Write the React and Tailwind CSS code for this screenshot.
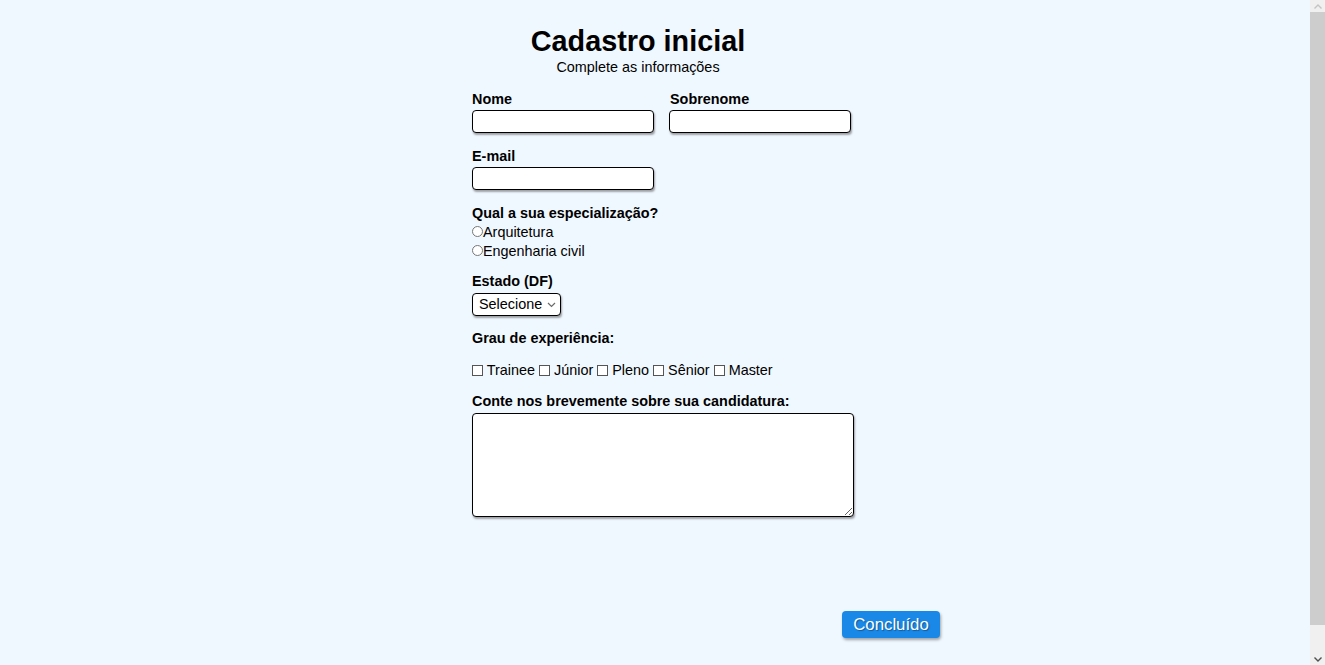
import React from "react";

const labelCls = "block text-[14.4px] leading-[17px] font-bold text-black";
const inputCls =
  "block h-[23px] w-[182px] rounded-[4px] border border-black bg-white px-1 text-[14px] outline-none shadow-[1px_2px_2px_rgba(0,0,0,0.35)]";

function Radio({ label }) {
  return (
    <label className="flex h-[19px] items-center leading-[19px]">
      <span className="mt-[-3px] inline-block h-[11px] w-[11px] rounded-full border border-[#767676] bg-white" />
      <span>{label}</span>
    </label>
  );
}

function Box() {
  return (
    <span className="mb-[-1px] inline-block h-[11px] w-[11px] border border-[#555] bg-white align-baseline" />
  );
}

// page scrollbar as seen in the screenshot
function Scrollbar() {
  return (
    <div className="flex h-full w-[15px] shrink-0 flex-col bg-[#f0f0f0]">
      <div className="flex h-[12px] items-center justify-center">
        <svg width="8" height="5" viewBox="0 0 8 5">
          <path d="M0.5 4.5L4 1l3.5 3.5" fill="none" stroke="#c4c4c4" strokeWidth="1.4" />
        </svg>
      </div>
      <div className="h-[613px] bg-[#cdcdcd]" />
      <div className="flex-1" />
      <div className="flex h-[12px] items-center justify-center">
        <svg width="8" height="5" viewBox="0 0 8 5">
          <path d="M0.5 0.5L4 4l3.5-3.5" fill="none" stroke="#505050" strokeWidth="1.4" />
        </svg>
      </div>
    </div>
  );
}

export default function App() {
  const levels = ["Trainee", "Júnior", "Pleno", "Sênior", "Master"];

  return (
    <div className="flex h-screen w-full bg-[#f0f8ff] font-['Liberation_Sans',Arial,sans-serif] text-black">
      <div className="flex-1 overflow-hidden">
        <div className="flex justify-center pt-[25px] pb-[58px]">
          <form className="w-[366px]" onSubmit={(e) => e.preventDefault()}>
            <div className="w-[332px] text-center">
              <h1 className="text-[28.8px] leading-[33px] font-bold">Cadastro inicial</h1>
              <p className="mt-[1px] text-[14.4px] leading-[17px]">Complete as informações</p>
            </div>

            <div className="mt-[15px] flex gap-[15px]">
              <div>
                <label className={labelCls}>Nome</label>
                <input type="text" className={inputCls + " mt-[2px]"} />
              </div>
              <div>
                <label className={labelCls + " pl-[1px]"}>Sobrenome</label>
                <input type="text" className={inputCls + " mt-[2px]"} />
              </div>
            </div>

            <div className="mt-[15px]">
              <label className={labelCls}>E-mail</label>
              <input type="email" className={inputCls + " mt-[2px]"} />
            </div>

            <div className="mt-[15px] text-[14.4px]">
              <p className={labelCls}>Qual a sua especialização?</p>
              <div className="mt-[1px]">
                <Radio label="Arquitetura" />
                <Radio label="Engenharia civil" />
              </div>
            </div>

            <div className="mt-[12px]">
              <label className={labelCls}>Estado (DF)</label>
              <div className="mt-[3px] flex h-[23px] w-[89px] items-center justify-between rounded-[4px] border border-black bg-white pl-[6px] pr-[4px] text-[14.4px] shadow-[1px_2px_2px_rgba(0,0,0,0.35)]">
                <span>Selecione</span>
                <svg width="9" height="6" viewBox="0 0 9 6" fill="none">
                  <path d="M1 1l3.5 3.5L8 1" stroke="#6b6b6b" strokeWidth="1.2" />
                </svg>
              </div>
            </div>

            <p className={labelCls + " mt-[14px]"}>Grau de experiência:</p>
            <p className="mt-[15px] text-[14.4px] leading-[17px]">
              {levels.map((l, i) => (
                <React.Fragment key={l}>
                  <Box /> {l}
                  {i < levels.length - 1 ? " " : ""}
                </React.Fragment>
              ))}
            </p>

            <label className={labelCls + " mt-[14px]"}>Conte nos brevemente sobre sua candidatura:</label>
            <textarea className="mt-[3px] block h-[104px] w-[382px] rounded-[4px] border border-black bg-white p-1 text-[14px] outline-none shadow-[1px_2px_2px_rgba(0,0,0,0.35)]" />

            <div className="mt-[94px] flex w-[468px] justify-end">
              <button
                type="submit"
                className="h-[27px] w-[98px] rounded-[4px] bg-[#1a88e6] text-[16.8px] leading-[27px] text-white shadow-[1px_2px_3px_rgba(0,0,0,0.35)] [text-shadow:1px_1px_1px_rgba(0,0,0,0.35)]"
              >
                Concluído
              </button>
            </div>
          </form>
        </div>
      </div>
      <Scrollbar />
    </div>
  );
}
